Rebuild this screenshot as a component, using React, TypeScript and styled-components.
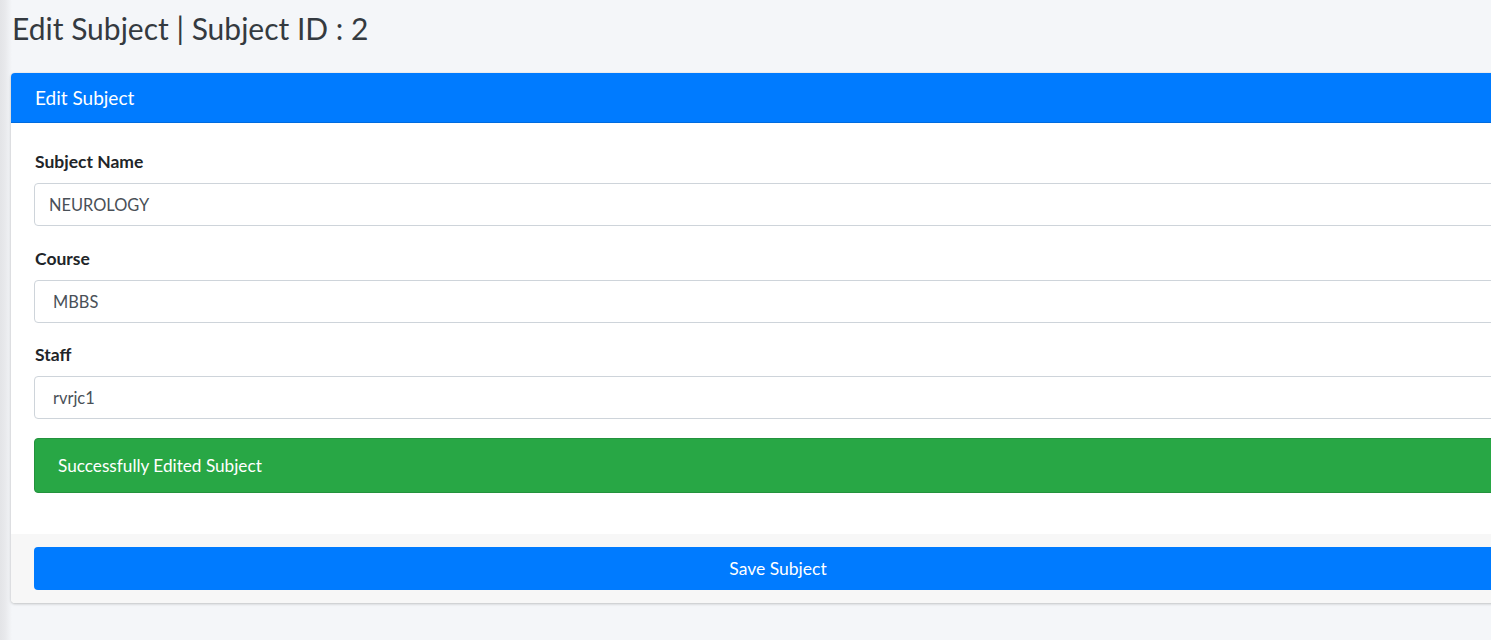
import React from "react";
import styled, { createGlobalStyle } from "styled-components";

const Global = createGlobalStyle`
  html, body {
    margin: 0;
    padding: 0;
    overflow: hidden;
    background: #f4f6f9;
  }
  body {
    font-family: Lato, "Liberation Sans", sans-serif;
  }
  * { box-sizing: border-box; }
`;

const Page = styled.div`
  min-height: 640px;
  width: 1491px;
  overflow: hidden;
  padding: 0 0 0 11px;
  background: linear-gradient(
    to right,
    #e3e4e7 0px,
    #e8e9ec 5px,
    #f4f6f9 12px
  );
`;

const Title = styled.h1`
  margin: 0;
  padding: 9px 0 0 1px;
  height: 73px;
  font-size: 30px;
  font-weight: 400;
  line-height: 38px;
  color: #343a40;
`;

const Card = styled.div`
  width: 1534px;
  flex: none;
  background: #fff;
  border-radius: 4px;
  box-shadow: 0 0 1px rgba(0, 0, 0, 0.125), 0 1px 3px rgba(0, 0, 0, 0.2);
  overflow: hidden;
`;

const CardHeader = styled.div`
  height: 50px;
  background: #007bff;
  color: #fff;
  display: flex;
  align-items: center;
  padding: 0 24px;
  font-size: 19px;
  border-bottom: 1px solid rgba(0, 0, 0, 0.125);
`;

const CardBody = styled.div`
  padding: 27px 23px 41px;
`;

const Group = styled.div`
  display: flex;
  flex-direction: column;
  margin-bottom: 20.5px;
`;

const Label = styled.label`
  font-weight: 700;
  font-size: 17.5px;
  line-height: 24px;
  color: #212529;
  margin: 0 1px 9px;
`;

const Field = styled.div<{ $pad: number }>`
  height: 43px;
  border: 1px solid #ced4da;
  border-radius: 4px;
  background: #fff;
  display: flex;
  align-items: center;
  padding-left: ${(p) => p.$pad}px;
  font-size: 16.4px;
  color: #495057;
`;

const Alert = styled.div`
  margin-top: -2px;
  height: 55px;
  background: #28a745;
  border: 1px solid #23923d;
  border-radius: 4px;
  color: #fff;
  font-size: 17.2px;
  display: flex;
  align-items: center;
  padding-left: 23px;
`;

const CardFooter = styled.div`
  background: #f7f7f7;
  padding: 13px 23px;
`;

const Button = styled.button`
  width: 100%;
  height: 43px;
  border: none;
  border-radius: 4px;
  background: #007bff;
  color: #fff;
  font-family: inherit;
  font-size: 17.5px;
`;

export default function App() {
  return (
    <>
      <Global />
      <Page>
        <Title>Edit Subject | Subject ID : 2</Title>
        <Card>
          <CardHeader>Edit Subject</CardHeader>
          <CardBody>
            <Group>
              <Label>Subject Name</Label>
              <Field $pad={14}>NEUROLOGY</Field>
            </Group>
            <Group>
              <Label>Course</Label>
              <Field $pad={18}>MBBS</Field>
            </Group>
            <Group>
              <Label>Staff</Label>
              <Field $pad={18}>rvrjc1</Field>
            </Group>
            <Alert>Successfully Edited Subject</Alert>
          </CardBody>
          <CardFooter>
            <Button>Save Subject</Button>
          </CardFooter>
        </Card>
      </Page>
    </>
  );
}
